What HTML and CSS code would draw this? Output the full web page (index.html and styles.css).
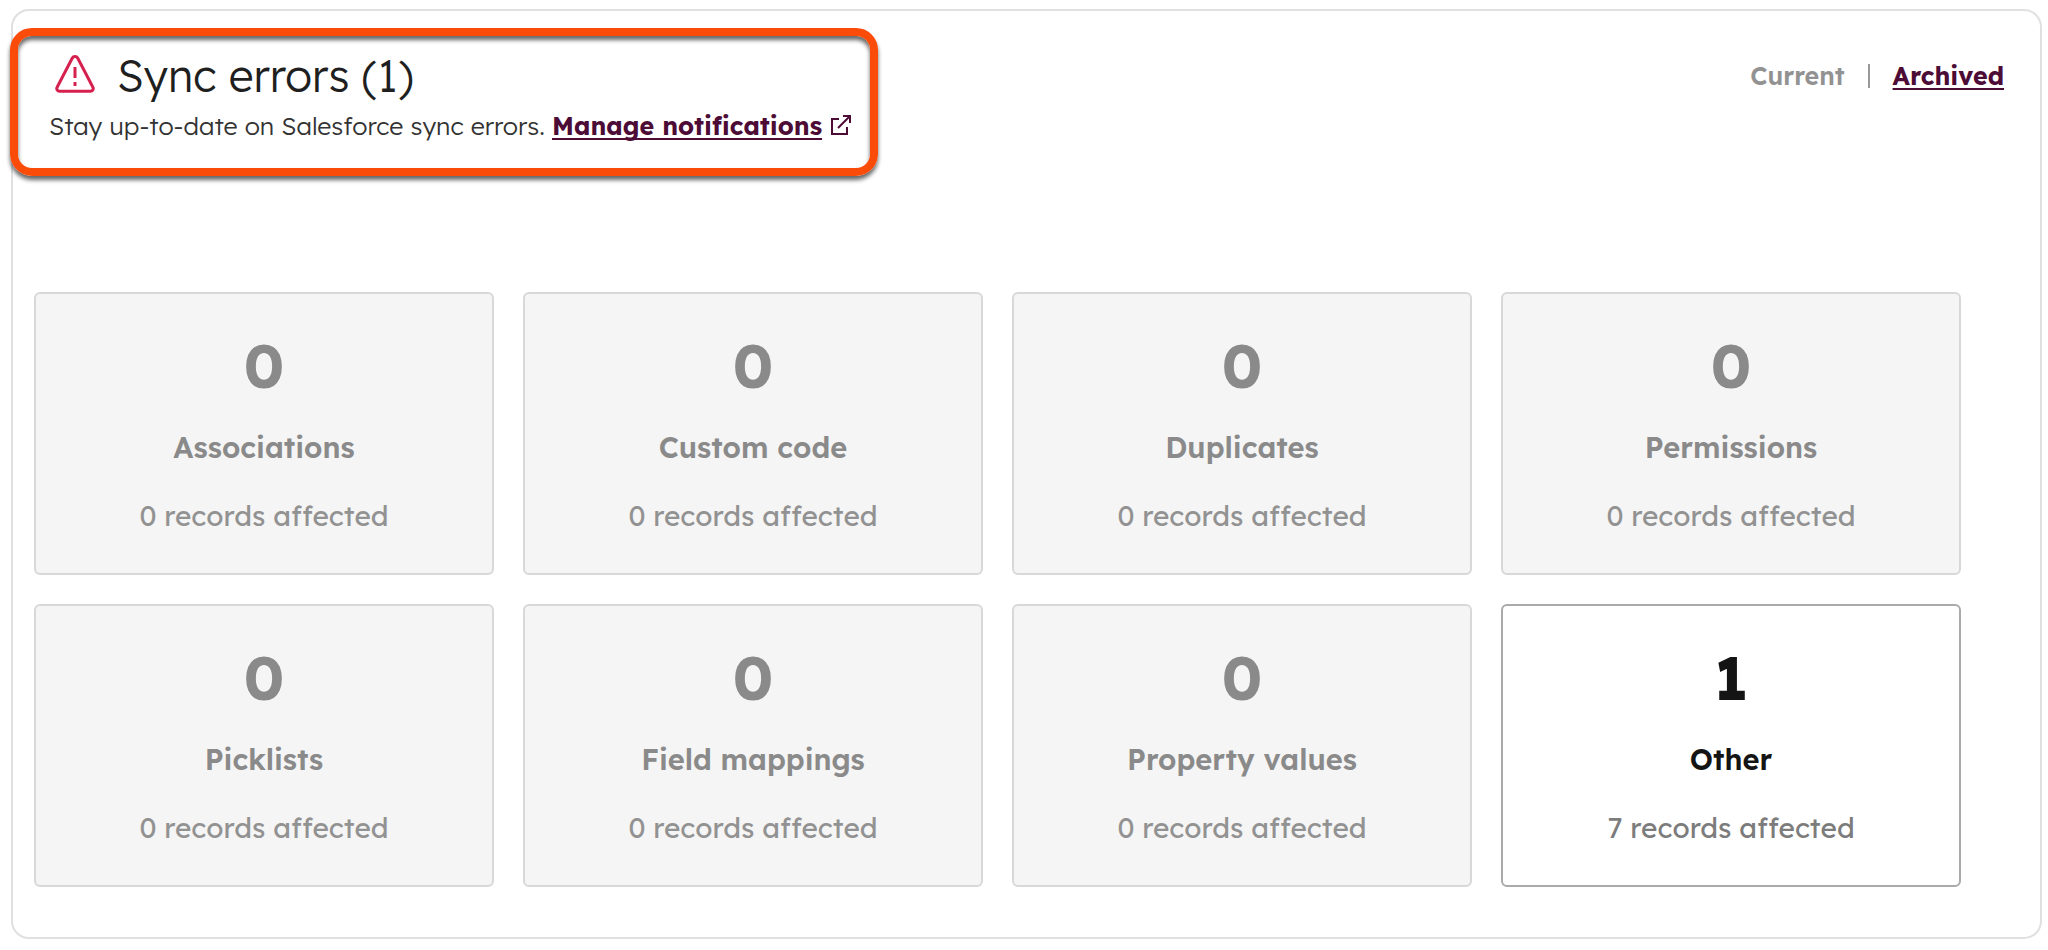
FILE: index.html
```
<!DOCTYPE html>
<html lang="en">
<head>
  <meta charset="UTF-8">
  <meta name="viewport" content="width=device-width, initial-scale=1">
  <title>Sync errors</title>
  <link rel="stylesheet" href="styles.css">
</head>
<body>
  <main class="panel">
    <header class="panel-header">
      <div class="callout">
        <div class="title-row">
          <svg class="warning-icon" viewBox="0 0 40 38" aria-hidden="true">
            <path d="M17.200 3.200a3.200 3.200 0 0 1 5.600 0l15.100 29a2.700 2.700 0 0 1-2.400 4H4.500a2.700 2.700 0 0 1-2.400-4z"/>
            <path d="M20 12v11M20 27v4"/>
          </svg>
          <h1>Sync errors (1)</h1>
        </div>
        <p>
          Stay up-to-date on Salesforce sync errors.
          <a href="#notifications">Manage notifications</a>
          <svg class="external-icon" viewBox="0 0 20 20" aria-hidden="true">
            <path d="M8 4H1v15h15v-7M12 1h7v7M19 1L7 13"/>
          </svg>
        </p>
      </div>

      <nav class="tabs">
        <span class="current">Current</span>
        <span class="divider"></span>
        <a href="#archived">Archived</a>
      </nav>
    </header>

    <div class="grid">
      <button class="card" disabled>
        <span class="count">0</span>
        <span class="label">Associations</span>
        <span class="records">0 records affected</span>
      </button>
      <button class="card" disabled>
        <span class="count">0</span>
        <span class="label">Custom code</span>
        <span class="records">0 records affected</span>
      </button>
      <button class="card" disabled>
        <span class="count">0</span>
        <span class="label">Duplicates</span>
        <span class="records">0 records affected</span>
      </button>
      <button class="card" disabled>
        <span class="count">0</span>
        <span class="label">Permissions</span>
        <span class="records">0 records affected</span>
      </button>
      <button class="card" disabled>
        <span class="count">0</span>
        <span class="label">Picklists</span>
        <span class="records">0 records affected</span>
      </button>
      <button class="card" disabled>
        <span class="count">0</span>
        <span class="label">Field mappings</span>
        <span class="records">0 records affected</span>
      </button>
      <button class="card" disabled>
        <span class="count">0</span>
        <span class="label">Property values</span>
        <span class="records">0 records affected</span>
      </button>
      <button class="card">
        <span class="count">1</span>
        <span class="label">Other</span>
        <span class="records">7 records affected</span>
      </button>
    </div>
  </main>
</body>
</html>
```

FILE: styles.css
```
* {
  margin: 0;
  padding: 0;
  box-sizing: border-box;
}

body {
  padding: 9px 6px 11px 11px;
  background: #fff;
  color: #333;
  font-family: "Lexend Deca", Lexend, Inter, "Liberation Sans", sans-serif;
  font-size: 25px;
}

.panel {
  padding: 17px 0 50px;
  border: 2px solid #e0e0e0;
  border-radius: 18px;
}

.panel-header {
  display: flex;
  justify-content: space-between;
  align-items: flex-start;
  margin-bottom: 116px;
}

/* sits on top of the panel's left border */
.callout {
  width: 868px;
  max-width: 100%;
  margin-left: -3px;
  padding: 14px 12px 25px 31px;
  border: 8px solid #fa4b08;
  border-radius: 22px;
  box-shadow: 0 4px 4px rgba(0, 0, 0, 0.6), inset 0 4px 4px rgba(0, 0, 0, 0.6);
}

.title-row {
  display: flex;
  align-items: center;
  gap: 22px;
  padding-left: 6px;
}

.warning-icon {
  width: 40px;
  height: 38px;
  margin-bottom: 4px;
  fill: none;
  stroke: #d6204e;
  stroke-width: 3;
}

h1 {
  color: #1f1f1f;
  font-size: 44px;
  font-weight: 300;
  line-height: 52px;
}

.callout p {
  padding-top: 7px;
  font-weight: 350;
  line-height: 34px;
}

a {
  color: #4c0c36;
  font-weight: 700;
  text-decoration: underline;
  text-decoration-thickness: 2px;
  text-underline-offset: 3px;
  text-decoration-skip-ink: none;
}

.external-icon {
  width: 20px;
  height: 20px;
  margin-left: 2px;
  fill: none;
  stroke: #4c0c36;
  stroke-width: 2;
}

.tabs {
  display: flex;
  align-items: center;
  gap: 23px;
  padding: 32px 36px 0 0;
  line-height: 32px;
}

.tabs .current {
  color: #929292;
  font-weight: 600;
}

.divider {
  width: 2px;
  height: 24px;
  background: #999;
}

.grid {
  display: grid;
  grid-template-columns: repeat(4, 1fr);
  gap: 29px;
  margin: 0 79px 0 21px;
}

.card {
  display: flex;
  flex-direction: column;
  align-items: center;
  padding: 36px 16px 37px;
  background: #fff;
  border: 2px solid #aaa;
  border-radius: 6px;
  color: #141414;
  font-family: inherit;
  font-size: 28px;
  line-height: 40px;
  cursor: pointer;
}

.count {
  font-size: 60px;
  font-weight: 750;
  line-height: 72px;
}

.label {
  margin-top: 25px;
  font-size: 29px;
  font-weight: 600;
}

.records {
  margin-top: 29px;
  color: #7c7c7c;
}

.card:disabled {
  background: #f5f5f5;
  border-color: #d8d8d8;
  color: #8a8a8a;
  cursor: default;
}

.card:disabled .records {
  color: #929292;
}

@media (max-width: 1000px) {
  .grid {
    grid-template-columns: repeat(2, 1fr);
    margin: 0 22px;
  }
}
```
